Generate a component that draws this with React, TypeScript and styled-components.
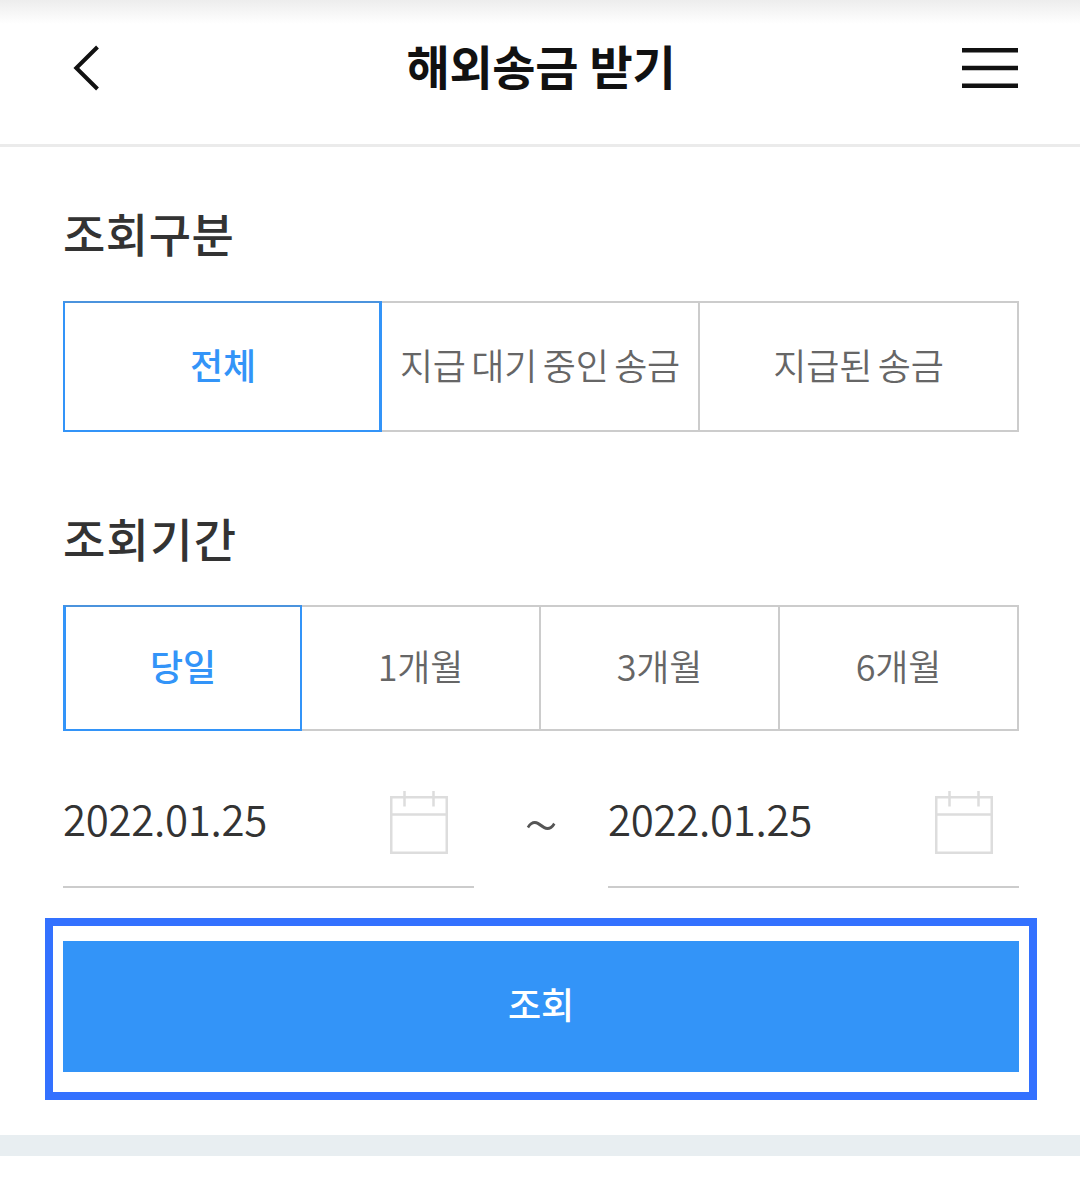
import React from "react";
import styled, { createGlobalStyle } from "styled-components";

const Global = createGlobalStyle`
  * { box-sizing: border-box; }
  body { margin: 0; background: #fff; font-family: "Noto Sans CJK KR", sans-serif; }
  button { font-family: inherit; padding: 0; margin: 0; border: 0; background: none; }
`;

const Page = styled.div`
  height: 1194px;
  overflow: hidden;
  background: #fff;
`;

const Header = styled.header`
  height: 147px;
  border-bottom: 3px solid #ebebeb;
  padding: 0 61px 8px 72px;
  display: grid;
  grid-template-columns: 60px 1fr 60px;
  align-items: center;
  background: linear-gradient(#ededed, #fff 24px);
`;

const Title = styled.h1`
  margin: 0;
  padding: 0 9px 7px 0;
  text-align: center;
  font-size: 47px;
  line-height: 68px;
  font-weight: 700;
  letter-spacing: -0.3px;
  word-spacing: 1px;
  color: #111;
`;

const IconButton = styled.button<{ $end?: boolean }>`
  display: flex;
  justify-content: ${(p) => (p.$end ? "flex-end" : "flex-start")};
`;

const Form = styled.main`
  padding: 0 61px 0 63px;
`;

const Heading = styled.h2<{ $top: number; $spacing: number }>`
  margin: ${(p) => p.$top}px 0 0;
  height: 68px;
  line-height: 68px;
  font-size: 46px;
  font-weight: 500;
  letter-spacing: ${(p) => p.$spacing}px;
  color: #333;
`;

const Segments = styled.div<{ $columns: string; $height: number; $top: number }>`
  display: grid;
  grid-template-columns: ${(p) => p.$columns};
  height: ${(p) => p.$height}px;
  margin-top: ${(p) => p.$top}px;
`;

const Segment = styled.button<{ $active?: boolean; $thick?: "left" | "right" }>`
  && {
    padding-bottom: 6px;
    padding-left: ${(p) => (p.$thick === "right" ? 2 : 0)}px;
    border: 2px solid ${(p) => (p.$active ? "#3394f8" : "#ccc")};
    ${(p) => (p.$active ? "border-top-color: #4b93dd;" : "border-left: 0;")}
    ${(p) => (p.$thick ? `border-${p.$thick}-width: 3px;` : "")}
    ${(p) => (p.$active ? "" : `font-family: "Noto Sans CJK KR DemiLight", "Noto Sans CJK KR", sans-serif;`)}
  }
  color: ${(p) => (p.$active ? "#3394f8" : "#666")};
  font-size: 36px;
  font-weight: ${(p) => (p.$active ? 500 : 350)};
  letter-spacing: ${(p) => (p.$active ? 0 : -0.15)}px;
  word-spacing: -2.4px;
  white-space: nowrap;
`;

const Dates = styled.div`
  display: grid;
  grid-template-columns: 411px 1fr 411px;
  height: 102px;
  margin-top: 55px;
`;

const DateField = styled.div`
  display: flex;
  justify-content: space-between;
  padding: 4px 26px 0 0;
  border-bottom: 2px solid #ccc;
  font-family: "Noto Sans CJK KR DemiLight", "Noto Sans CJK KR", sans-serif;
  font-size: 42px;
  font-weight: 350;
  letter-spacing: -0.3px;
  line-height: 55px;
  color: #333;
`;

const Tilde = styled.span`
  text-align: center;
  font-size: 64px;
  font-weight: 300;
  line-height: 70px;
  color: #555;
`;

const Highlight = styled.div`
  margin: 30px 43px 0 45px;
  height: 182px;
  padding: 15px 10px;
  border: 8px solid #3371ff;
`;

const Submit = styled.button`
  && {
    display: block;
    width: 100%;
    height: 131px;
    padding-bottom: 7px;
    background: #3394f8;
    color: #fff;
    font-size: 36px;
    font-weight: 500;
  }
`;

const Divider = styled.div`
  height: 21px;
  margin-top: 35px;
  background: #e8eef1;
`;

const Back = () => (
  <svg width="30" height="48" viewBox="0 0 30 48" fill="none" stroke="#111" strokeWidth="4">
    <path d="M25.5 3 4.3 24 25.5 45" />
  </svg>
);
const Menu = () => (
  <svg width="58" height="44" viewBox="0 0 58 44" stroke="#111" strokeWidth="4.6">
    <path d="M1 4.3h56M1 22h56M1 39.7h56" />
  </svg>
);
const Calendar = () => (
  <svg width="59" height="64" viewBox="0 0 59 64" fill="none" stroke="#ddd" strokeWidth="2.5">
    <path d="M2.25 7.25h55.5v55.5h-55.5zM2.25 24.4h55.5M15.5 1v15.5M44.5 1v15.5" />
  </svg>
);

export default function App() {
  return (
    <Page>
      <Global />
      <Header>
        <IconButton aria-label="이전"><Back /></IconButton>
        <Title>해외송금 받기</Title>
        <IconButton aria-label="메뉴" $end><Menu /></IconButton>
      </Header>
      <Form>
        <Heading $top={51} $spacing={0.5}>조회구분</Heading>
        <Segments $columns="319px 318px 319px" $height={131} $top={35}>
          <Segment $active $thick="right">전체</Segment>
          <Segment>지급 대기 중인 송금</Segment>
          <Segment>지급된 송금</Segment>
        </Segments>
        <Heading $top={71} $spacing={1.3}>조회기간</Heading>
        <Segments $columns="239px 239px 239px 239px" $height={126} $top={34}>
          <Segment $active $thick="left">당일</Segment>
          <Segment>1개월</Segment>
          <Segment>3개월</Segment>
          <Segment>6개월</Segment>
        </Segments>
        <Dates>
          <DateField>2022.01.25<Calendar /></DateField>
          <Tilde>~</Tilde>
          <DateField>2022.01.25<Calendar /></DateField>
        </Dates>
      </Form>
      <Highlight><Submit>조회</Submit></Highlight>
      <Divider />
    </Page>
  );
}
